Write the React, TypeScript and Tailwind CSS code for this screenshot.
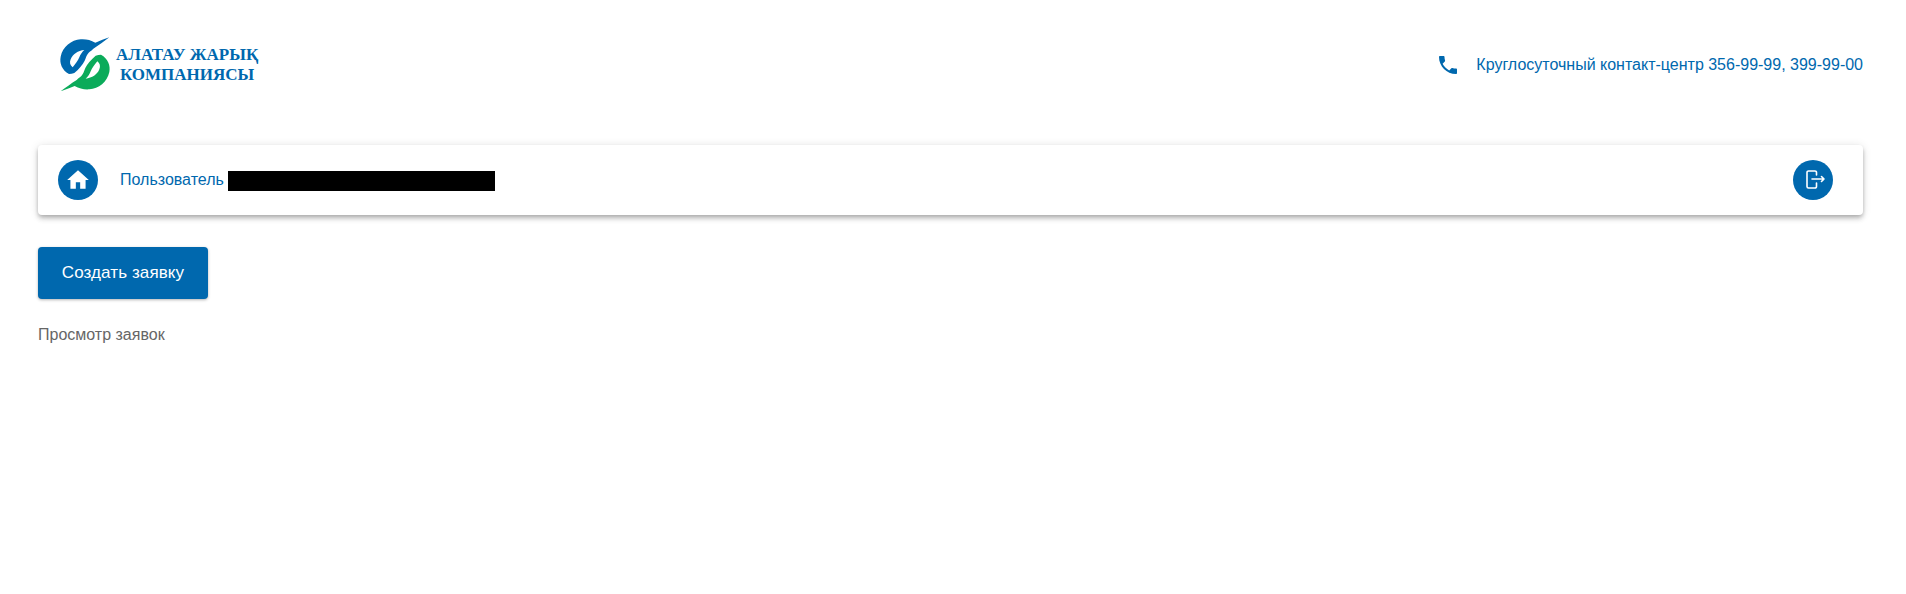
function Logo() {
  return (
    <div className="flex items-center w-[208px] h-[60px] -ml-[8px]">
      <svg width="70" height="70" viewBox="0 0 210 210" className="shrink-0">
        <path
          fill="#0068ae"
          fillRule="evenodd"
          d="M178 22 C164 27 150 32 136 38 C122 30 108 27 92 28 C64 30 38 50 32 80 C28 100 36 120 57 132 C62 132 68 131 73 129 C88 116 98 104 104 92 C108 82 110 74 116 68 C122 63 126 60 130 56 C146 46 162 34 178 22Z M103 60 C84 62 68 72 62 88 C58 98 60 106 68 112 C76 102 84 92 88 82 C91 74 96 66 103 60Z"
        />
        <path
          fill="#0bab5a"
          fillRule="evenodd"
          d="M32 184 C46 179 60 174 74 168 C88 176 102 179 118 178 C146 176 172 156 178 126 C182 106 174 86 153 74 C148 74 142 75 137 77 C122 90 112 102 106 114 C102 124 100 132 94 138 C88 143 84 146 80 150 C64 160 48 172 32 184Z M107 146 C126 144 142 134 148 118 C152 108 150 100 142 94 C134 104 126 114 122 124 C119 132 114 140 107 146Z"
        />
      </svg>
      <div className="font-['Liberation_Serif',serif] font-bold text-[#0068ae] text-[17px] leading-[20px] text-center -ml-[4px] pt-[1px] whitespace-nowrap">
        <div>АЛАТАУ ЖАРЫҚ</div>
        <div>КОМПАНИЯСЫ</div>
      </div>
    </div>
  );
}

export default function App() {
  return (
    <div className="min-h-[594px] bg-white pl-[38px] pr-[43px] font-['Liberation_Sans',sans-serif] text-base">
      <header className="flex items-center justify-between h-[129px] mb-4 pl-[20px]">
        <Logo />
        <div className="flex items-center gap-4 text-[#0068ae]">
          <svg width="24" height="24" viewBox="0 0 24 24" fill="#0068ae">
            <path d="M6.62 10.79c1.44 2.83 3.76 5.14 6.59 6.59l2.2-2.2c.27-.27.67-.36 1.02-.24 1.12.37 2.33.57 3.57.57.55 0 1 .45 1 1V20c0 .55-.45 1-1 1-9.39 0-17-7.61-17-17 0-.55.45-1 1-1h3.5c.55 0 1 .45 1 1 0 1.25.2 2.45.57 3.57.11.35.03.74-.25 1.02l-2.2 2.2z" />
          </svg>
          <span>Круглосуточный контакт-центр 356-99-99, 399-99-00</span>
        </div>
      </header>

      <div className="flex items-center h-[70px] pl-[20px] pr-[30px] rounded bg-white shadow-[0_2px_4px_-1px_rgba(0,0,0,0.2),0_4px_5px_0_rgba(0,0,0,0.14),0_1px_10px_0_rgba(0,0,0,0.12)]">
        <button className="flex items-center justify-center w-10 h-10 rounded-full bg-[#0068ae]">
          <svg width="26" height="26" viewBox="0 0 24 24" fill="#ffffff">
            <path d="M10 20v-6h4v6h5v-8h3L12 3 2 12h3v8z" />
          </svg>
        </button>
        <div className="flex items-center ml-[22px] text-[#0068ae]">
          <span>Пользователь</span>
          <span className="w-[267px] h-5 ml-[4px] mt-[2px] bg-black" />
        </div>
        <button className="flex items-center justify-center w-10 h-10 ml-auto rounded-full bg-[#0068ae]">
          <svg width="24" height="24" viewBox="0 0 24 24" fill="none" stroke="#ffffff" strokeWidth="1.6" strokeLinecap="round" strokeLinejoin="round">
            <path d="M15.500 7V4.500A1.500 1.500 0 0 0 14 3H7.500A1.500 1.500 0 0 0 6 4.500v14A1.500 1.500 0 0 0 7.500 20H14a1.500 1.500 0 0 0 1.500-1.500V15" />
            <path d="M11 11h12M20.500 8.500 23 11l-2.500 2.500" />
          </svg>
        </button>
      </div>

      <button className="block w-[170px] h-[52px] mt-[32px] rounded bg-[#0068ae] text-white text-[17px] font-medium tracking-[0.1px] shadow-[0_1px_3px_rgba(0,0,0,0.3)]">
        Создать заявку
      </button>

      <p className="mt-[24px] text-[#666666]">Просмотр заявок</p>
    </div>
  );
}
